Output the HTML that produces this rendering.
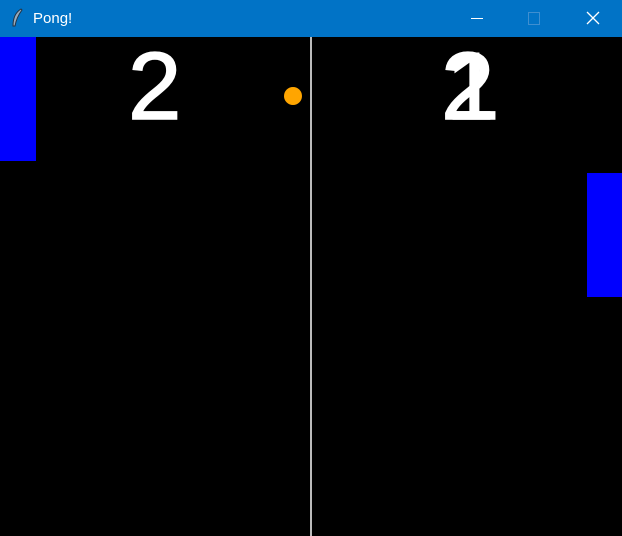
<!DOCTYPE html>
<html><head><style>
body{margin:0;width:622px;height:536px;overflow:hidden;background:#000;font-family:"Liberation Sans",sans-serif;position:relative}
.bar{position:absolute;left:0;top:0;width:622px;height:37px;background:#0173c6;color:#fff}
.t{position:absolute;left:33px;top:10px;font-size:15px}
.d{position:absolute;color:#fff;font-size:96px;line-height:1;-webkit-text-stroke:1.5px #fff}
</style></head><body>
<div class="bar">
<svg style="position:absolute;left:10px;top:8px" width="14" height="20"><path d="M11 1 C6 4 3 10 3 18 L5 18 C6 12 9 6 12 2Z" fill="#9ab" stroke="#234" stroke-width="1"/></svg>
<div class="t">Pong!</div>
<div style="position:absolute;left:471px;top:18px;width:12px;height:1px;background:#fff"></div>
<div style="position:absolute;left:528px;top:12px;width:10px;height:11px;border:1px solid #3f8fd0"></div>
<svg style="position:absolute;left:586px;top:11px" width="14" height="14"><path d="M1 1L13 13M13 1L1 13" stroke="#fff" stroke-width="1.3"/></svg>
</div>
<div style="position:absolute;left:0;top:37px;width:36px;height:124px;background:#0000ff"></div>
<div style="position:absolute;left:587px;top:173px;width:35px;height:124px;background:#0000ff"></div>
<div style="position:absolute;left:310px;top:37px;width:2px;height:499px;background:#bbb"></div>
<div style="position:absolute;left:284px;top:87px;width:18px;height:18px;border-radius:50%;background:#ffa500"></div>
<div class="d" style="left:128px;top:39px">2</div>
<div class="d" style="left:441px;top:39px">2</div>
<div class="d" style="left:446px;top:39px">1</div>
</body></html>
